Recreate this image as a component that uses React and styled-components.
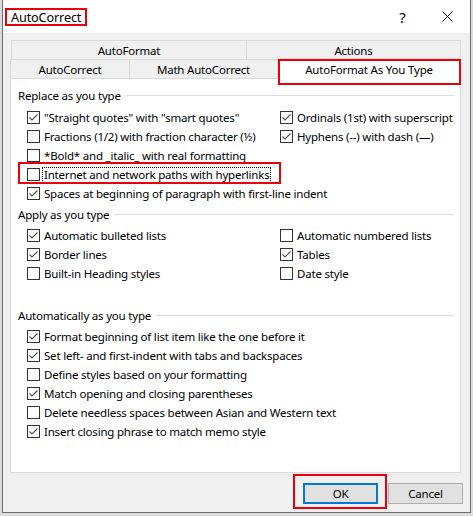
import React from 'react';
import styled, { createGlobalStyle } from 'styled-components';

const Global = createGlobalStyle`
  html, body { margin: 0; padding: 0; background: #dcdcdc; }
  body {
    font-family: "Noto Sans", "Open Sans", sans-serif;
    font-size: 11.5px;
    letter-spacing: -0.2px;
    color: #000;
  }
  * { box-sizing: border-box; }
`;

const Window = styled.div`
  margin-left: 2px;
  width: 469px;
  height: 513px;
  border: 1px solid #6e6e6e;
  border-top: none;
  background: #f0f0f0;
  display: flex;
  flex-direction: column;
`;

const TitleBar = styled.div`
  height: 33px;
  background: #fff;
  display: flex;
  align-items: center;
`;

const Title = styled.span`
  margin-left: 4px;
  padding: 0 4px;
  line-height: 14px;
  font-size: 12.7px;
  letter-spacing: -0.15px;
  outline: 2px solid #e8000b;
`;

const Controls = styled.div`
  margin-left: auto;
  display: flex;
  height: 100%;
`;

const CtrlButton = styled.div`
  width: 45px;
  height: 100%;
  display: flex;
  align-items: center;
  justify-content: center;
  font-size: 15px;
`;

const Body = styled.div`
  flex: 1;
  display: flex;
  flex-direction: column;
  padding: 7px 9px 8px 7px;
`;

const TabRow = styled.div`
  display: flex;
  align-items: flex-start;
  height: 19px;
  margin-left: ${p => p.$indent || 0}px;
`;

const Tab = styled.div`
  width: ${p => (p.$w ? `${p.$w}px` : 'auto')};
  flex: ${p => (p.$w ? 'none' : '1')};
  height: 19px;
  line-height: 19px;
  text-align: center;
  border-top: 1px solid #d9d9d9;
  border-left: 1px solid #d9d9d9;
  border-right: ${p => (p.$last ? '1px solid #d9d9d9' : 'none')};
  white-space: nowrap;
`;

const ActiveTab = styled.div`
  flex: 1;
  position: relative;
  z-index: 1;
  margin-top: -1px;
  height: 21px;
  line-height: 22px;
  text-align: center;
  background: #fff;
  border: 1px solid #d9d9d9;
  border-bottom: none;
  white-space: nowrap;
  &::after {
    content: '';
    position: absolute;
    left: 0;
    right: -1px;
    top: 0;
    bottom: -6px;
    border: 2px solid #e8000b;
  }
`;

const Panel = styled.div`
  height: 395px;
  background: #fff;
  border: 1px solid #d9d9d9;
  padding: 7px 6px 0 7px;
`;

const Group = styled.div`
  margin-top: ${p => p.$mt || 0}px;
`;

const GroupHeader = styled.div`
  display: flex;
  align-items: center;
  height: 18px;
  gap: 5px;
  &::after {
    content: '';
    flex: 1;
    height: 1px;
    background: #dcdcdc;
  }
`;

const Rows = styled.div`
  display: grid;
  grid-template-columns: 253px 1fr;
  grid-auto-rows: 19px;
  padding-top: ${p => p.$pt || 3}px;
  padding-left: 9px;
`;

const Item = styled.div`
  position: relative;
  display: flex;
  align-items: center;
  gap: 4px;
  grid-column: ${p => (p.$full ? '1 / -1' : 'auto')};
  white-space: nowrap;
  ${p => p.$marked && `
    &::after {
      content: '';
      position: absolute;
      left: -9px;
      width: 259px;
      top: -3px;
      bottom: 0;
      border: 2px solid #e8000b;
    }
  `}
`;

const Box = styled.span`
  width: 13px;
  height: 13px;
  flex: none;
  border: 1px solid #333;
  background: #fff;
  display: flex;
  align-items: center;
  justify-content: center;
`;

const Label = styled.span`
  line-height: 14px;
  ${p => p.$focus && `
    outline: 1px dotted #000;
    outline-offset: 0;
    margin-left: -1px;
    padding: 0 1px;
  `}
`;

const ButtonBar = styled.div`
  display: flex;
  justify-content: flex-end;
  gap: 10px;
  margin-top: 10px;
  margin-right: -2px;
`;

const Button = styled.div`
  position: relative;
  width: 75px;
  height: 21px;
  display: flex;
  align-items: center;
  justify-content: center;
  background: #e1e1e1;
  border: ${p => (p.$primary ? '2px solid #0078d7' : '1px solid #adadad')};
  ${p => p.$marked && `
    &::after {
      content: '';
      position: absolute;
      left: -12px;
      right: -11px;
      top: -11px;
      bottom: -7px;
      border: 2px solid #e8000b;
    }
  `}
`;

const Check = ({ on }) => (
  <Box>
    {on && (
      <svg width="11" height="11" viewBox="0 0 11 11">
        <path d="M1.5 5.5 L4 8 L9.5 2.5" fill="none" stroke="#505050" strokeWidth="1.1" />
      </svg>
    )}
  </Box>
);

const CheckItem = ({ on, label, full, marked, focus }) => (
  <Item $full={full} $marked={marked}>
    <Check on={on} />
    <Label $focus={focus}>{label}</Label>
  </Item>
);

export default function App() {
  return (
    <>
      <Global />
      <Window>
        <TitleBar>
          <Title>AutoCorrect</Title>
          <Controls>
            <CtrlButton>?</CtrlButton>
            <CtrlButton>
              <svg width="11" height="11" viewBox="0 0 11 11">
                <path d="M0.5 0.5 L10.5 10.5 M10.5 0.5 L0.5 10.5" stroke="#000" strokeWidth="1" />
              </svg>
            </CtrlButton>
          </Controls>
        </TitleBar>
        <Body>
          <TabRow $indent={1}>
            <Tab $w={235}>AutoFormat</Tab>
            <Tab $last>Actions</Tab>
          </TabRow>
          <TabRow>
            <Tab $w={119}>AutoCorrect</Tab>
            <Tab $w={148}>Math AutoCorrect</Tab>
            <ActiveTab>AutoFormat As You Type</ActiveTab>
          </TabRow>
          <Panel>
            <Group>
              <GroupHeader>Replace as you type</GroupHeader>
              <Rows $pt={4}>
                <CheckItem on label={'"Straight quotes" with "smart quotes"'} />
                <CheckItem on label="Ordinals (1st) with superscript" />
                <CheckItem label="Fractions (1/2) with fraction character (½)" />
                <CheckItem on label="Hyphens (--) with dash (—)" />
                <CheckItem full label="*Bold* and _italic_ with real formatting" />
                <CheckItem full marked focus label="Internet and network paths with hyperlinks" />
                <CheckItem full on label="Spaces at beginning of paragraph with first-line indent" />
              </Rows>
            </Group>
            <Group $mt={2}>
              <GroupHeader>Apply as you type</GroupHeader>
              <Rows>
                <CheckItem on label="Automatic bulleted lists" />
                <CheckItem label="Automatic numbered lists" />
                <CheckItem on label="Border lines" />
                <CheckItem on label="Tables" />
                <CheckItem label="Built-in Heading styles" />
                <CheckItem label="Date style" />
              </Rows>
            </Group>
            <Group $mt={23}>
              <GroupHeader>Automatically as you type</GroupHeader>
              <Rows>
                <CheckItem full on label="Format beginning of list item like the one before it" />
                <CheckItem full on label="Set left- and first-indent with tabs and backspaces" />
                <CheckItem full label="Define styles based on your formatting" />
                <CheckItem full on label="Match opening and closing parentheses" />
                <CheckItem full label="Delete needless spaces between Asian and Western text" />
                <CheckItem full on label="Insert closing phrase to match memo style" />
              </Rows>
            </Group>
          </Panel>
          <ButtonBar>
            <Button $primary $marked>OK</Button>
            <Button>Cancel</Button>
          </ButtonBar>
        </Body>
      </Window>
    </>
  );
}
